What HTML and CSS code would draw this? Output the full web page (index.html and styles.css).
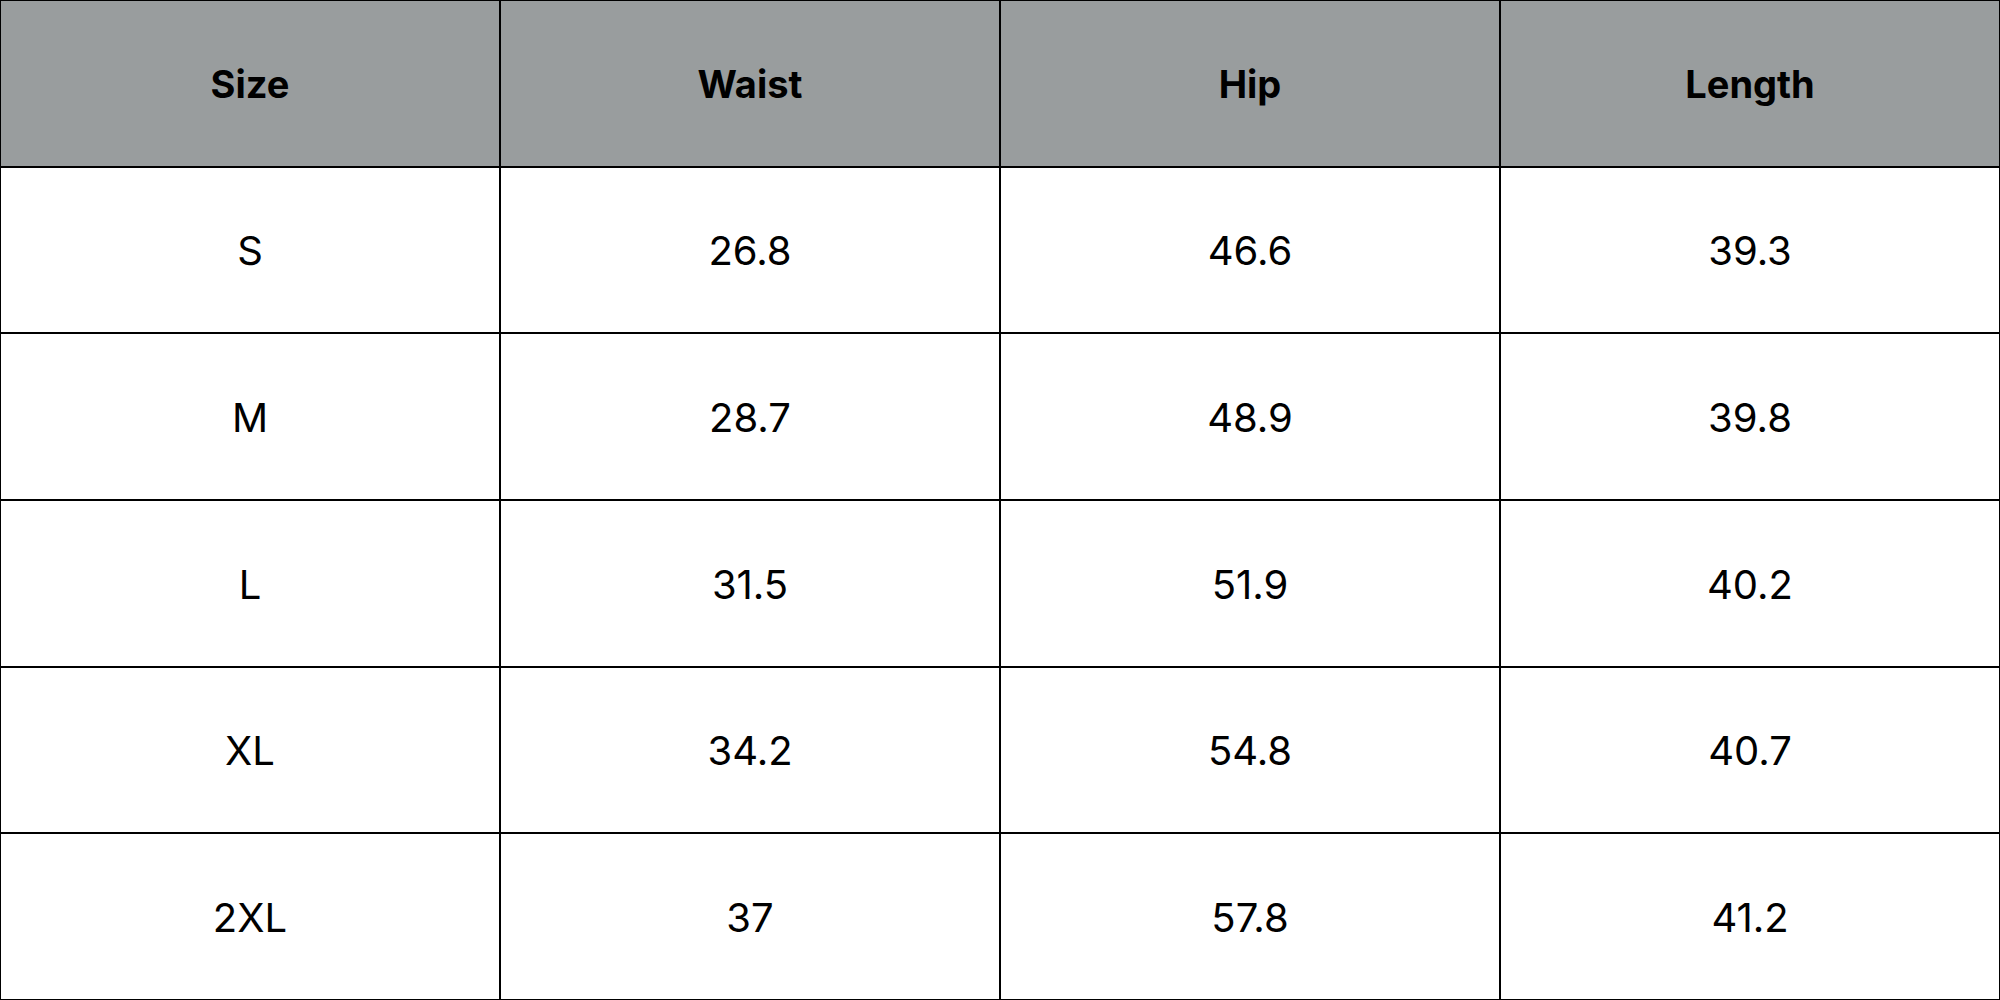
FILE: index.html
```html
<!DOCTYPE html>
<html>
<head>
<meta charset="utf-8">
<link rel="stylesheet" href="styles.css">
</head>
<body>
<div class="table">
  <div class="cell head">Size</div>
  <div class="cell head">Waist</div>
  <div class="cell head">Hip</div>
  <div class="cell head">Length</div>
  <div class="cell">S</div><div class="cell">26.8</div><div class="cell">46.6</div><div class="cell">39.3</div>
  <div class="cell">M</div><div class="cell">28.7</div><div class="cell">48.9</div><div class="cell">39.8</div>
  <div class="cell">L</div><div class="cell">31.5</div><div class="cell">51.9</div><div class="cell">40.2</div>
  <div class="cell">XL</div><div class="cell">34.2</div><div class="cell">54.8</div><div class="cell">40.7</div>
  <div class="cell">2XL</div><div class="cell">37</div><div class="cell">57.8</div><div class="cell">41.2</div>
</div>
</body>
</html>
```
FILE: styles.css
```css
html, body {
  margin: 0;
  padding: 0;
  background: #ffffff;
}
.table {
  box-sizing: border-box;
  width: 2000px;
  height: 1000px;
  border: 1px solid #000;
  background: #000;
  display: grid;
  grid-template-columns: repeat(4, 1fr);
  grid-template-rows: repeat(6, 1fr);
  gap: 2px;
  font-family: "Inter", "Open Sans", "Liberation Sans", sans-serif;
}
.cell {
  background: #ffffff;
  color: #000;
  display: flex;
  align-items: center;
  justify-content: center;
  padding-top: 2px;
  font-size: 40px;
  font-weight: 400;
}
.cell.head {
  background: #999d9e;
  font-weight: 700;
  font-size: 38px;
}
```
